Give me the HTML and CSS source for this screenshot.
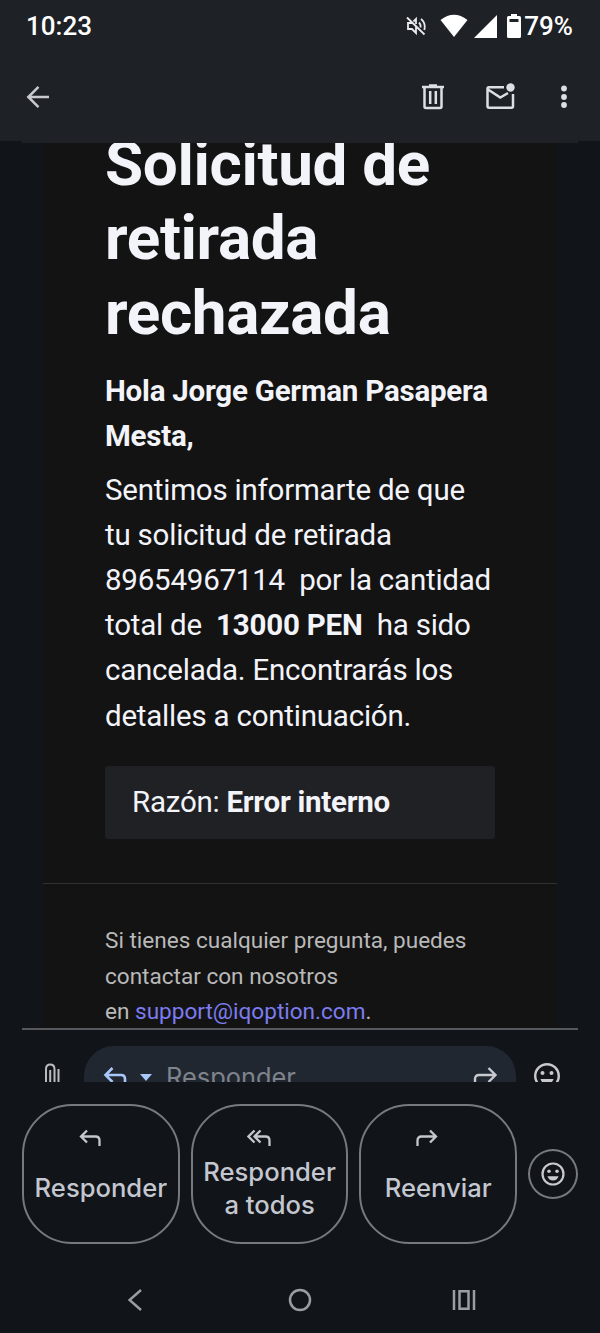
FILE: index.html
```html
<!DOCTYPE html>
<html lang="es">
<head>
	<meta charset="utf-8">
	<title>Solicitud de retirada rechazada</title>
	<link rel="stylesheet" href="styles.css">
</head>
<body>
	<header>
		<div class="status">
			<span class="clock">10:23</span>
			<svg class="mute" width="22" height="22" viewBox="0 0 22 22" fill="none" stroke="#e8eaed" stroke-width="1.8">
				<path d="M7 8H3v6h4l4 4V12M8.500 6.500L11 4v5M2 2.500L19.500 19.500"/>
				<path d="M14 7.500q2 2 1.500 5M16 4q5 4 3.300 11"/>
			</svg>
			<svg class="wifi" width="28" height="24" viewBox="0 0 28 24"><path d="M0.500 6Q14-4.500 27.500 6L14 23z" fill="#fff"/></svg>
			<svg class="signal" width="23" height="23" viewBox="0 0 23 23"><path d="M0 23L23 0v23z" fill="#fff"/></svg>
			<svg class="battery" width="14" height="24" viewBox="0 0 14 24">
				<path fill="#fff" fill-rule="evenodd" d="M4 0h6v2h2.500q1.500 0 1.500 1.500v19q0 1.500-1.500 1.500h-11Q0 24 0 22.500v-19Q0 2 1.500 2H4zM2.500 5v3h9V5z"/>
			</svg>
			<span class="percent">79%</span>
		</div>
		<div class="toolbar">
			<svg class="back" width="24" height="24" viewBox="0 0 24 24" fill="none" stroke="#c7c9ce" stroke-width="2.500"><path d="M23 12H2M12.500 1.800L2.300 12l10.200 10.200"/></svg>
			<svg class="trash" width="22" height="26" viewBox="0 0 22 26" fill="none" stroke="#dcdfe4" stroke-width="2.500">
				<path d="M0 3h22M7 1.500h8M2.500 3v19.500q0 1.500 1.500 1.500h14q1.500 0 1.500-1.500V3M8.200 7v13M13.800 7v13"/>
			</svg>
			<svg class="mail" width="30" height="27" viewBox="0 0 30 27">
				<path d="M18 4.300H3q-1.500 0-1.500 1.500v17.500q0 1.500 1.500 1.500h22.500q1.500 0 1.500-1.500V11M2 6.500l12.300 8L22 10" fill="none" stroke="#dcdfe4" stroke-width="2.500"/>
				<circle cx="24.500" cy="4.500" r="4.200" fill="#dcdfe4"/>
			</svg>
			<svg class="more" width="6" height="24" viewBox="0 0 6 24" fill="#dcdfe4"><circle cx="3" cy="3.500" r="2.900"/><circle cx="3" cy="12" r="2.900"/><circle cx="3" cy="20" r="2.900"/></svg>
		</div>
	</header>
	<div class="edge"></div>
	<main>
		<article class="mail-body">
			<div class="content">
				<h1>Solicitud de<br>retirada<br>rechazada</h1>
				<p class="hello">Hola Jorge German Pasapera<br>Mesta,</p>
				<p class="text">Sentimos informarte de que<br>tu solicitud de retirada<br>89654967114&nbsp; por la cantidad<br>total de&nbsp; <b>13000 PEN</b>&nbsp; ha sido<br>cancelada. Encontrarás los<br>detalles a continuación.</p>
				<div class="reason">Razón: <b>Error interno</b></div>
			</div>
			<div class="support">Si tienes cualquier pregunta, puedes<br>contactar con nosotros<br>en <a>support@iqoption.com</a>.</div>
		</article>
	</main>
	<div class="composer">
		<svg class="clip" width="18" height="30" viewBox="0 0 18 30" fill="none" stroke="#b9bbc0" stroke-width="2"><path d="M2 30V6q0-4.500 4.200-4.500T10.500 6v24M6.200 30V7M14.500 30V6"/></svg>
		<div class="field">
			<svg class="reply" width="24" height="24" viewBox="0 0 24 24" fill="none" stroke="#a8c7fa" stroke-width="2.600"><path d="M9.500 2L2.500 9l7 7M2.500 9H18q4 0 4 4v8"/></svg>
			<svg class="caret" width="12" height="7" viewBox="0 0 12 7"><path d="M0 0h12L6 7z" fill="#a8c7fa"/></svg>
			<span>Responder</span>
			<svg class="forward" width="25" height="24" viewBox="0 0 25 24" fill="none" stroke="#c7c9ce" stroke-width="2.400"><path d="M15.500 2l7 7-7 7M22.500 9H6q-4 0-4 4v8"/></svg>
		</div>
		<svg class="smile" width="28" height="28" viewBox="0 0 28 28" fill="none" stroke="#c7c9ce" stroke-width="2.400">
			<circle cx="14" cy="14" r="11.800"/>
			<path d="M7.500 17h13q-1.500 5-6.500 5t-6.500-5z" fill="#c7c9ce" stroke="none"/>
			<circle cx="9.500" cy="11" r="2" fill="#c7c9ce" stroke="none"/><circle cx="18.500" cy="11" r="2" fill="#c7c9ce" stroke="none"/>
		</svg>
	</div>
	<div class="actions">
		<div class="action">
			<svg width="22" height="18" viewBox="0 0 22 18"><path d="M8 1.500L2 7.500l6 6M2 7.500h14.500q4 0 4 4V17"/></svg>
			<span>Responder</span>
		</div>
		<div class="action two">
			<svg width="24" height="18" viewBox="0 0 24 18"><path d="M7.500 1.500L1.500 7.500l6 6M13.500 1.500L7.500 7.500l6 6M8 7.500h10.500q4 0 4 4V17"/></svg>
			<span>Responder<br>a todos</span>
		</div>
		<div class="action">
			<svg width="22" height="18" viewBox="0 0 22 18"><path d="M14 1.500l6 6-6 6M20 7.500H5.500q-4 0-4 4V17"/></svg>
			<span>Reenviar</span>
		</div>
		<div class="emoji">
			<svg width="26" height="26" viewBox="0 0 28 28" fill="none" stroke="#c7c9ce" stroke-width="2.400">
				<circle cx="14" cy="14" r="11.300"/>
				<path d="M8 16.500h12q-1.500 4.500-6 4.500t-6-4.500z" fill="#c7c9ce" stroke="none"/>
				<circle cx="9.700" cy="11" r="1.900" fill="#c7c9ce" stroke="none"/><circle cx="18.300" cy="11" r="1.900" fill="#c7c9ce" stroke="none"/>
			</svg>
		</div>
	</div>
	<nav>
		<svg width="14" height="22" viewBox="0 0 14 22"><path d="M13 1L1.500 11 13 21"/></svg>
		<svg class="home" width="24" height="24" viewBox="0 0 24 24"><circle cx="12" cy="12" r="10"/></svg>
		<svg width="24" height="22" viewBox="0 0 24 22"><path d="M2 1v20M22 1v20M7.500 2.200h9v17.600h-9z"/></svg>
	</nav>
</body>
</html>
```
FILE: styles.css
```css
* {
	box-sizing: border-box;
}
body {
	margin: 0;
	height: 1333px;
	overflow: hidden;
	display: flex;
	flex-direction: column;
	background: #111418;
	font-family: Roboto, sans-serif;
	color: #f3f3fa;
}
svg {
	display: block;
	flex: none;
}
header {
	height: 141px;
	background: #1e2125;
}
.status {
	height: 52px;
	display: flex;
	align-items: center;
	padding: 0 27px 0 26px;
	color: #fff;
	font-size: 26px;
	font-weight: 500;
}
.clock {
	margin-right: auto;
}
.mute {
	margin-right: 13px;
}
.wifi {
	margin-right: 6px;
}
.signal {
	margin-right: 10px;
}
.percent {
	margin-left: 3px;
}
.toolbar {
	height: 89px;
	display: flex;
	align-items: center;
	padding: 0 33px 0 26px;
}
.back {
	margin-right: auto;
}
.trash {
	margin-right: 42px;
}
.mail {
	margin-right: 45px;
}
.edge {
	height: 2px;
	margin: 0 22px;
	background: #1e2125;
}
main {
	height: 885px;
	padding: 0 43px;
	overflow: hidden;
}
.mail-body {
	height: 885px;
	background: #131313;
}
.content {
	display: flow-root;
	height: 741px;
	padding: 0 62px;
	border-bottom: 1px solid #303030;
}
h1 {
	margin: -16px 0 0;
	font-size: 62px;
	line-height: 74.400px;
	font-weight: 700;
	letter-spacing: -0.350px;
	white-space: nowrap;
}
p {
	margin: 0;
	font-size: 29.500px;
	line-height: 45.200px;
	letter-spacing: -0.220px;
	white-space: nowrap;
}
.hello {
	padding-top: 19px;
	font-weight: 700;
}
.text {
	padding-top: 8px;
}
.reason {
	margin-top: 27px;
	height: 73px;
	padding-left: 27px;
	background: #202124;
	border-radius: 3px;
	font-size: 29.500px;
	line-height: 72px;
	letter-spacing: -0.250px;
}
.support {
	padding: 39px 62px 0;
	font-size: 22.550px;
	line-height: 35.500px;
	color: #b9b9b9;
	white-space: nowrap;
}
.support a {
	color: #7c7cf0;
}
.composer {
	height: 54px;
	margin: 0 22px;
	padding: 16px 16px 0 22px;
	border-top: 2px solid #55585c;
	display: flex;
	overflow: hidden;
}
.clip {
	margin: 17px 22px 0 0;
}
.field {
	width: 432px;
	height: 62px;
	margin-right: 17px;
	border-radius: 30px 30px 0 0;
	background: #212731;
	display: flex;
	padding: 20px 18px 0 18px;
	font-family: Inter, sans-serif;
	font-size: 25.400px;
	line-height: 21px;
	color: #7f838b;
}
.reply {
	margin-left: 1px;
}
.caret {
	margin: 8px 14px 0 13px;
}
.forward {
	margin-left: auto;
}
.smile {
	margin-top: 16px;
}
.actions {
	height: 184px;
	padding: 22px 22px 0;
	display: flex;
	gap: 11px;
}
.action {
	width: 158px;
	height: 140px;
	padding-top: 23px;
	border: 2px solid #76797d;
	border-radius: 50px;
	display: flex;
	flex-direction: column;
	align-items: center;
	font-family: Inter, sans-serif;
	font-size: 25.600px;
	font-weight: 500;
	line-height: 33px;
	color: #c4c7d0;
	text-align: center;
}
.action svg {
	margin-right: 22px;
	fill: none;
	stroke: #c4c7cc;
	stroke-width: 2.300;
}
.action span {
	margin-top: 24px;
}
.two span {
	margin-top: 8px;
}
.emoji {
	width: 50px;
	height: 50px;
	margin-top: 45px;
	border: 2px solid #76797d;
	border-radius: 50%;
	display: flex;
	align-items: center;
	justify-content: center;
}
nav {
	height: 67px;
	padding: 0 124px 0 128px;
	display: flex;
	align-items: center;
	justify-content: space-between;
}
nav svg {
	fill: none;
	stroke: #9a9da1;
	stroke-width: 2.500;
}
.home {
	margin-left: 6px;
}
```
